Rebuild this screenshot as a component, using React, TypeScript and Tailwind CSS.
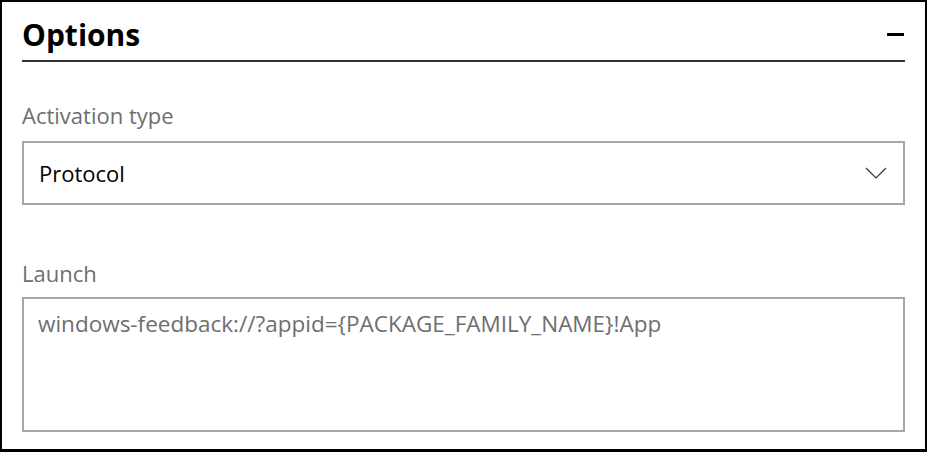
export default function App() {
  return (
    <div className="w-[927px] h-[452px] bg-white">
      <section
        className="h-full border-l-[2px] border-t-[2px] border-r-[2px] border-b-[3px] border-black px-5 pt-[10px]"
        style={{ fontFamily: '"Open Sans", "Noto Sans", sans-serif' }}
      >
        <header className="flex items-center justify-between h-[50px] border-b-2 border-[#333]">
          <h2 className="text-[30px] font-bold text-black leading-none mb-[2px]">Options</h2>
          <button aria-label="Collapse" className="w-[17px] h-[3px] bg-black mr-[1px] mb-[3px]" />
        </header>

        <div className="mt-[38px]">
          <label className="block text-[22px] text-[#6e6e6e] leading-[30px]">Activation type</label>
          <div className="mt-[11px] h-[64px] border-2 border-[#a6a6a6] flex items-center justify-between pl-[15px] pr-[16px]">
            <span className="text-[22px] text-black leading-[30px]">Protocol</span>
            <svg width="22" height="12" viewBox="0 0 22 12" fill="none">
              <path d="M1 1 L11 11 L21 1" stroke="#333" strokeWidth="1.2" />
            </svg>
          </div>
        </div>

        <div className="mt-[53px]">
          <label className="block text-[22px] text-[#6e6e6e] leading-[30px]">Launch</label>
          <div className="mt-[9px] h-[135px] border-2 border-[#a6a6a6] px-[14px] pt-[10px]">
            <span className="text-[22.5px] text-[#6e6e6e] leading-[30px]">
              windows-feedback://?appid={"{"}PACKAGE_FAMILY_NAME{"}"}!App
            </span>
          </div>
        </div>
      </section>
    </div>
  );
}
